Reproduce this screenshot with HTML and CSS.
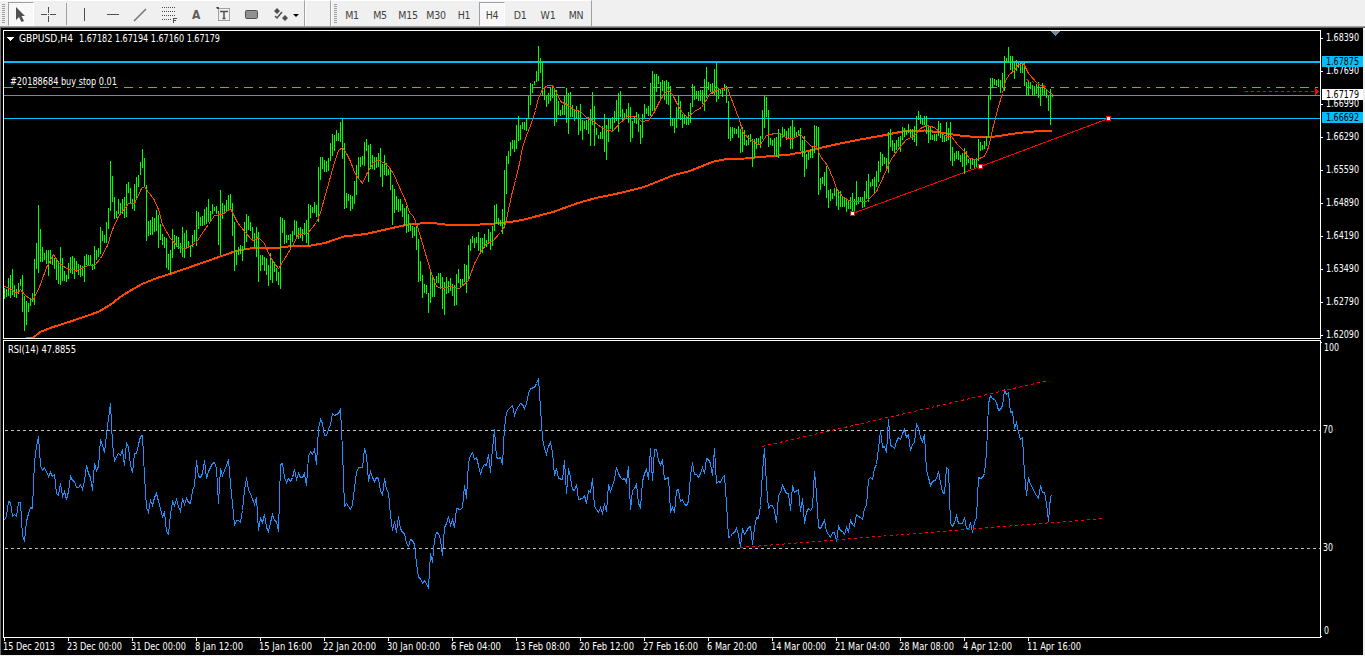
FILE: index.html
```html
<!DOCTYPE html>
<html lang="en">
<head>
    <meta charset="UTF-8">
    <meta name="viewport" content="width=device-width, initial-scale=1.0">
    <title>GBPUSD,H4</title>
    <link rel="stylesheet" href="styles.css">
</head>
<body>

<div class="toolbar">
    <div class="tools">
        <span class="grip"></span>
        <button class="tool pressed" title="Cursor"><svg width="26" height="23"><path d="M8 4V17L11 14L13.5 19L16 18L13.5 13H17Z" fill="#505050"/></svg></button>
        <button class="tool" title="Crosshair"><svg width="26" height="23"><path d="M5 11.5H11M14 11.5H20M12.5 4V10M12.5 13V19M12 11.5H13" stroke="#505050"/></svg></button>
        <span class="separator"></span>
        <button class="tool" title="Vertical line"><svg width="26" height="23"><path d="M13.5 5V18" stroke="#505050"/></svg></button>
        <button class="tool" title="Horizontal line"><svg width="26" height="23"><path d="M8 11.5H20" stroke="#505050"/></svg></button>
        <button class="tool" title="Trendline"><svg width="26" height="23"><path d="M7 18L19 6" stroke="#707070" stroke-width="1.4"/></svg></button>
        <button class="tool" title="Fibonacci"><svg width="26" height="23"><path d="M7 4.5H21M7 8.5H21M7 12.5H21M7 16.5H16" stroke="#505050" stroke-dasharray="1 1"/><path d="M18.5 20V15M18 15.5H22M18 17.5H21" stroke="#505050"/></svg></button>
        <button class="tool letter" title="Text">A</button>
        <button class="tool" title="Label"><svg width="26" height="23"><rect x="7.5" y="5.5" width="11" height="12" fill="none" stroke="#505050" stroke-dasharray="1 1"/><path d="M5 4H8V6H6Z" fill="#505050"/><path d="M9 8.5H17M13 8V16M11.5 15.5H14.5" stroke="#505050" stroke-width="1.5"/></svg></button>
        <button class="tool" title="Rectangle"><svg width="26" height="23"><rect x="6.5" y="7.5" width="12" height="8" rx="1" fill="#909090" stroke="#505050"/></svg></button>
        <button class="tool wide" title="Arrows"><svg width="34" height="23"><path d="M7 8L10 5L13 8L10 11ZM15 15L18 12L21 15L18 18Z" fill="#505050"/><path d="M8 13L10 15L15 9" fill="none" stroke="#505050" stroke-width="1.5"/><path d="M26 11H32L29 14Z" fill="#000"/></svg></button>
    </div>
    <div class="blank"></div>
    <div class="tools periods">
        <span class="grip"></span>
        <button class="tool">M1</button>
        <button class="tool">M5</button>
        <button class="tool">M15</button>
        <button class="tool">M30</button>
        <button class="tool">H1</button>
        <button class="tool pressed">H4</button>
        <button class="tool">D1</button>
        <button class="tool">W1</button>
        <button class="tool">MN</button>
    </div>
</div>

<div class="chart-window">
    <svg class="chart" viewBox="0 28 1363 627" width="1363" height="627">
        <!-- price levels -->
        <path class="level-thick" d="M4 62H1320"/>
        <path class="level" d="M4 118.5H1320"/>
        <path class="order" d="M4 87.5H1320"/>
        <path class="bid" d="M4 95.5H1320"/>
        <path class="stop" d="M1245 91.5H1315"/>
        <path d="M1315 88L1319 91.5L1315 95Z" fill="#f00"/>
        <path d="M1051 31H1060L1055.5 36Z" fill="#778899"/>

        <!-- price window -->
        <path class="trend" d="M852.5 213.5L980.5 166.5L1108.5 118.5"/>
        <path class="slow" id="slow"/>
        <path class="bars" id="bars"/>
        <path class="fast" id="fast"/>
        <path class="stop" d="M1026 79.5L1046 86.5"/>
        <g class="handles">
            <rect x="850.5" y="211.5" width="4" height="4"/>
            <rect x="978.5" y="164.5" width="4" height="4"/>
            <rect x="1106.5" y="116.5" width="4" height="4"/>
        </g>

        <!-- RSI window -->
        <path class="rsi-level" d="M5 430.5H1320M5 548.5H1320"/>
        <path class="rsi" id="rsi"/>
        <path class="stop" d="M762 446.5L1048 380.5M740 547.5L1104 518.5"/>

        <!-- frames and axes -->
        <path class="frame" d="M3.5 338.5V30.5H1320.5V338.5ZM3.5 637.5V340.5H1320.5V637.5ZM1321 342.5H1322M1321 636.5H1322"/>
        <g id="axes"></g>
        <rect x="1322" y="56" width="41" height="11" fill="#00bfff"/>
        <rect x="1322" y="89" width="41" height="11" fill="#fff"/>
        <rect x="1322" y="112" width="41" height="11" fill="#00bfff"/>
        <g class="tags">
            <text x="1326" y="65" textLength="33" lengthAdjust="spacingAndGlyphs">1.67875</text>
            <text x="1326" y="98" textLength="33" lengthAdjust="spacingAndGlyphs">1.67179</text>
            <text x="1326" y="121" textLength="33" lengthAdjust="spacingAndGlyphs">1.66692</text>
        </g>
        <text x="1324" y="351" textLength="15" lengthAdjust="spacingAndGlyphs">100</text>
        <text x="1323" y="433" textLength="10" lengthAdjust="spacingAndGlyphs">70</text>
        <text x="1323" y="551" textLength="10" lengthAdjust="spacingAndGlyphs">30</text>
        <text x="1324" y="634" textLength="5" lengthAdjust="spacingAndGlyphs">0</text>
        <path d="M7 37H14L10.5 41Z" fill="#fff"/>
        <text x="19" y="42" textLength="54" lengthAdjust="spacingAndGlyphs">GBPUSD,H4</text>
        <text x="79" y="42" textLength="141" lengthAdjust="spacingAndGlyphs">1.67182 1.67194 1.67160 1.67179</text>
        <text x="10" y="85" textLength="107" lengthAdjust="spacingAndGlyphs">#20188684 buy stop 0.01</text>
        <text x="8" y="353" textLength="68" lengthAdjust="spacingAndGlyphs">RSI(14) 47.8855</text>
    </svg>
</div>

<script src="chart.js"></script>
</body>
</html>
```

FILE: styles.css
```css
body {
    margin: 0;
    height: 656px;
    overflow: hidden;
    background-color: #f0f0f0;
    font-family: "DejaVu Sans Condensed", "DejaVu Sans", sans-serif;
}
.toolbar {
    display: flex;
    box-sizing: border-box;
    height: 28px;
    border-bottom: 1px solid #696969;
    box-shadow: inset 0 -1px #a0a0a0;
}
.tools {
    display: flex;
    align-items: center;
    box-sizing: border-box;
    height: 26px;
    width: 305px;
    border-top: 1px solid #fff;
    border-right: 1px solid #a0a0a0;
}
.blank {
    box-sizing: border-box;
    width: 26px;
    height: 26px;
    border-top: 1px solid #fff;
    border-left: 1px solid #fff;
    border-right: 1px solid #a0a0a0;
}
.periods {
    width: 261px;
    border-left: 1px solid #fff;
}
.grip {
    width: 3px;
    height: 20px;
    margin: 0 2px 0 2px;
    background: repeating-linear-gradient(#a0a0a0 0 1px, #f0f0f0 1px 2px);
}
.periods .grip {
    margin-right: 1px;
}
.tool {
    flex: none;
    display: flex;
    align-items: center;
    justify-content: center;
    box-sizing: border-box;
    width: 26px;
    height: 24px;
    margin: 0 1px;
    padding: 2px 0 0;
    border: 1px solid transparent;
    background: none;
    font-family: inherit;
    font-size: 10.5px;
    letter-spacing: -0.3px;
    color: #404040;
}
.tool svg {
    flex: none;
}
.pressed {
    border-color: #a0a0a0 #fff #fff #a0a0a0;
    background-color: #f8f8f8;
}
.wide {
    width: 34px;
}
.letter {
    font-size: 12px;
    font-weight: bold;
    color: #606060;
}
.separator {
    width: 1px;
    height: 22px;
    margin: 0 3px;
    background-color: #a0a0a0;
}
.chart-window {
    box-sizing: border-box;
    width: 1363px;
    height: 627px;
    border-left: 1px solid #696969;
    background-color: #000;
}
.chart {
    display: block;
    margin-left: -1px;
    shape-rendering: crispEdges;
}
.chart path {
    stroke-width: 1;
}
.chart text {
    font-size: 10.5px;
    fill: #fff;
}
.chart .tags text {
    fill: #000;
}
.chart .level-thick {
    stroke: #00bfff;
    stroke-width: 2;
}
.level {
    stroke: #00bfff;
}
.order {
    stroke: #32cd32;
    stroke-dasharray: 9 6 3 6;
}
.bid {
    stroke: #778899;
}
.stop {
    stroke: #f00;
    stroke-dasharray: 3 3;
}
.trend {
    fill: none;
    stroke: #f00;
}
.bars {
    stroke: #0f0;
}
.fast {
    fill: none;
    stroke: #ff4500;
}
.chart .slow {
    fill: none;
    stroke: #ff4500;
    stroke-width: 2;
}
.handles rect {
    fill: #fff;
    stroke: #f00;
}
.rsi-level {
    stroke: #c0c0c0;
    stroke-dasharray: 3 3;
}
.rsi {
    fill: none;
    stroke: #1e90ff;
}
.frame, .tick {
    fill: none;
    stroke: #fff;
}
```

FILE: chart.js
```js
// high-low of every bar, one bar each 2px from x = 4
const bars = `
288-299 289-297 278-296 275-298 269-295 285-297 289-298 283-294 279-286 275-312
296-331 301-325 303-312 298-306 293-302 259-305 243-269 205-273 229-262 247-262
253-260 250-264 250-276 250-264 255-265 258-269 258-280 261-284 247-285 258-281
271-281 275-282 263-279 257-273 256-274 258-279 261-272 264-275 265-277 266-276
256-282 254-265 255-266 255-265 264-270 246-269 250-260 248-257 227-254 231-241
235-243 222-243 208-229 161-211 176-202 197-219 211-218 199-214 203-213 199-214
197-218 184-217 182-193 188-204 199-209 184-211 177-199 175-187 162-175 149-168
158-186 185-241 221-236 220-235 217-235 218-232 210-231 215-248 224-240 234-245
237-248 238-268 254-270 250-274 229-258 235-249 236-247 237-249 243-253 227-257
233-258 230-249 241-248 245-257 235-247 230-242 211-246 212-229 217-226 216-226
209-225 207-224 199-222 211-221 204-214 207-211 206-214 211-245 190-255 203-219
205-213 200-211 195-209 194-208 203-236 222-271 250-265 247-255 245-254 246-261
222-250 214-242 216-230 222-231 227-240 233-248 227-257 232-282 255-271 255-265
257-271 258-275 265-286 253-280 261-283 262-272 268-281 272-285 217-289 218-233
220-244 235-243 235-240 234-248 231-242 220-235 221-238 228-239 227-238 229-241
223-235 220-243 204-246 205-218 207-213 202-213 205-217 167-222 157-180 157-169
160-172 161-172 158-171 143-161 134-156 135-151 130-141 133-141 122-142 119-159
143-209 193-208 194-201 195-211 196-209 181-204 165-195 157-178 157-167 156-165
142-166 139-151 145-182 144-169 155-169 157-170 157-168 153-167 148-177 164-187
155-175 163-176 169-175 168-190 185-225 189-213 196-210 199-212 199-211 204-217
208-226 206-233 214-232 224-231 226-238 227-236 226-250 239-282 261-281 275-298
284-293 285-294 293-313 271-303 276-297 279-297 276-283 273-283 273-289 277-309
282-315 277-294 281-293 278-291 284-296 285-306 274-305 269-283 279-288 279-285
264-282 265-293 245-281 239-251 236-243 238-248 237-243 232-251 238-254 238-253
234-248 240-247 229-244 232-250 226-246 205-231 204-224 218-225 220-226 209-234
170-228 156-194 151-164 142-156 140-149 140-152 125-149 116-141 125-140 122-129
122-130 118-131 96-119 83-105 84-93 81-85 71-82 46-81 58-73 62-96
88-100 96-107 93-104 87-101 85-98 89-126 90-122 101-115 110-116 105-115
96-115 88-123 93-134 92-117 105-117 109-121 106-118 110-135 104-131 120-140
121-129 120-130 117-134 109-146 92-125 106-146 128-135 135-139 132-139 126-139
114-152 125-160 118-142 119-129 117-131 111-123 100-121 93-132 91-117 109-121
113-119 109-119 103-123 107-142 121-138 116-123 112-124 114-132 125-144 114-138
104-118 108-114 106-116 83-116 71-111 74-112 74-92 76-84 82-101 80-91
81-100 80-104 82-105 86-126 118-126 118-133 107-128 96-119 101-120 114-128
115-124 117-125 112-125 103-123 84-107 86-100 91-99 91-101 90-101 90-104
79-111 67-98 82-90 84-92 83-94 69-95 63-102 88-99 89-94 88-97
84-91 86-103 101-139 127-141 127-138 128-134 129-134 126-138 129-153 127-152
130-145 140-146 135-145 134-142 139-167 139-158 138-149 138-144 136-148 110-139
95-128 97-117 110-147 138-145 140-146 138-155 137-157 129-158 133-147 127-138
129-136 131-140 128-138 126-149 120-149 127-138 132-137 130-136 128-151 140-157
136-177 154-169 152-160 149-158 147-158 125-153 126-148 127-195 178-190 177-184
172-186 166-198 190-208 189-201 193-199 188-196 189-206 191-210 191-207 196-207
198-207 199-212 200-209 197-209 193-215 199-212 181-205 197-204 197-202 197-208
191-207 181-199 174-202 182-187 179-186 177-194 171-187 161-182 152-172 154-166
157-164 158-170 132-173 129-147 140-151 143-153 140-150 137-147 136-152 127-140
128-137 130-135 124-133 129-138 129-140 126-142 116-146 111-120 115-124 119-125
116-125 116-134 126-143 126-140 135-140 134-141 134-141 121-136 123-138 133-142
135-142 122-141 128-140 122-161 147-166 153-161 151-159 151-160 155-162 153-167
148-174 151-165 159-163 159-169 159-165 160-168 158-167 139-161 142-151 145-150
141-149 136-146 95-138 78-100 78-88 79-85 80-86 79-87 80-93 73-88
56-91 58-63 47-63 56-70 56-73 63-79 60-71 63-68 63-73 64-73
62-86 82-96 80-96 82-89 85-96 86-96 84-94 82-98 88-106 83-95
86-96 89-98 96-111 89-125 94-97`;

const fast = `4,286 12,289 14,292 18,292 20,289 24,294 30,299 33,299 40,284 46,267 53,254 58,262
66,268 76,270 88,265 94,265 100,258 107,245 112,229 118,216 128,203 134,203 141,188 144,186
148,192 153,198 158,209 162,224 170,238 178,247 186,248 190,245 195,243 201,234 208,224 214,215
222,214 230,208 237,222 244,231 251,239 253,240 258,237 264,243 269,255 274,263 278,268 283,260
291,247 298,234 307,233 316,222 320,212 327,187 334,162 338,150 342,147 346,153 350,161 355,174
362,183 367,172 373,162 378,160 383,162 388,166 393,173 399,187 405,200 409,212 413,216 417,226
424,250 431,273 436,286 443,288 450,286 459,288 468,280 474,263 480,252 486,243 492,241 500,232
504,226 506,219 511,195 515,180 519,163 522,147 526,135 530,125 535,110 538,98 542,89 547,85
552,85 556,92 560,101 568,105 573,109 580,111 586,117 592,120 598,125 605,129 612,131 619,123
627,116 635,116 641,121 648,120 653,113 659,101 664,93 668,90 672,94 677,104 682,112 687,117
694,111 701,107 710,93 716,90 722,88 727,87 730,96 738,117 743,133 750,139 757,144 760,144
766,135 774,133 780,133 786,138 793,138 800,134 805,140 811,146 816,146 820,156 827,165 833,179
836,188 842,196 850,201 866,201 876,191 883,176 890,160 897,150 905,140 914,135 920,128 926,125
934,127 940,132 946,136 951,136 957,144 963,150 969,158 976,159 984,156 988,147 992,129 998,106
1002,93 1005,80 1009,74 1013,71 1018,64 1023,63 1028,73 1037,83 1044,87 1050,93 1053,94`;

const slow = `26,338 33,338 40,332 53,327 72,321 98,312 110,305 123,295 142,284 157,278 173,273
196,265 216,258 236,251 250,248.5 280,247.5 288,246.5 308,246 325,243 344,236.5 366,234 390,228.5
408,224.5 420,223.5 433,223 445,224.5 480,224.5 494,223.5 510,222 522,220 553,212 578,203 596,198
620,193 644,187 664,179 674,175 690,171 712,162 726,159 745,158.5 766,156.5 790,154.5 806,151.5
820,148 840,143.5 860,139.5 880,136 905,131 925,130.5 940,132.5 960,135.5 975,137 992,137
1018,133 1040,131 1052,130.5`;

const rsi = `4,520 6,515 8,501 10,502 12,516 14,514 16,516 18,502 20,502 22,535 24,541 26,521 28,513
30,507 32,508 34,461 36,446 38,436 40,465 42,470 44,467 48,476 50,472 52,476 54,474 56,493 58,495
60,483 62,496 64,491 66,499 68,491 70,476 72,480 74,481 76,487 78,487 80,484 82,489 84,480 86,465
88,473 90,477 92,490 94,463 96,470 98,466 100,439 102,445 104,452 106,434 108,418 110,403 112,443
114,461 116,456 118,453 120,455 122,449 124,465 126,442 128,447 130,465 132,472 134,453 136,453
138,444 140,436 142,435 144,476 146,507 148,512 150,500 152,505 154,497 156,493 158,501 162,516
164,512 166,531 168,534 170,514 172,501 174,505 176,499 178,506 180,511 182,498 184,504 186,498
188,502 190,503 192,490 194,485 196,460 198,476 200,477 202,473 204,460 206,478 208,471 212,463
214,462 216,468 218,503 220,468 222,475 226,465 228,459 230,483 232,503 234,525 236,520 238,520
240,522 242,510 244,490 246,477 248,490 250,493 254,504 256,497 258,530 260,518 262,522 264,514
266,527 268,531 270,522 272,514 274,520 276,521 278,531 280,464 282,463 284,477 286,482 288,478
290,481 292,477 294,469 296,479 298,473 300,477 302,477 304,473 306,485 308,456 310,451 312,454
314,449 316,464 318,428 320,419 322,423 324,435 326,435 328,429 330,424 332,413 334,415 336,414
338,413 340,409 342,450 344,506 346,503 350,509 352,504 354,487 356,472 358,467 362,467 364,448
366,455 368,481 370,471 372,477 374,481 376,477 378,478 380,490 382,495 384,478 386,489 388,492
390,515 392,530 394,521 396,532 398,516 400,528 402,532 404,533 406,543 408,546 410,539 412,540
414,544 416,563 418,577 420,578 422,583 424,580 428,587 430,553 432,562 434,539 436,532 438,533
440,539 442,555 444,527 446,523 448,516 450,525 452,519 454,527 456,508 460,509 462,507 464,485
466,498 468,462 470,455 472,452 474,459 476,457 478,465 480,474 482,467 484,464 486,465 488,454
490,472 492,448 494,429 496,457 498,458 500,457 502,464 504,427 506,412 508,409 512,405 514,415
516,409 520,403 522,404 524,408 526,403 528,393 530,388 534,387 536,383 538,378 540,408 542,438
544,448 546,454 548,446 550,442 552,452 554,475 556,468 558,478 562,479 564,460 566,493 568,468
570,477 572,489 574,490 576,484 578,499 582,498 584,495 586,503 588,490 590,492 592,478 594,506
598,512 600,507 602,513 604,503 606,511 608,484 610,491 612,485 614,479 616,467 618,473 620,477
622,479 624,478 626,482 628,466 630,509 632,490 634,488 636,484 638,503 640,507 642,481 644,473
646,469 648,479 650,448 652,480 654,449 656,449 658,460 660,464 662,460 664,479 666,478 668,477
670,511 672,507 674,512 676,490 678,489 680,501 682,499 684,504 686,505 688,501 690,475 692,462
694,474 696,474 698,477 700,473 702,467 704,473 706,458 708,459 710,463 712,475 714,448 716,483
718,481 720,482 722,477 724,475 726,503 728,537 730,536 732,533 734,532 736,528 738,534 740,546
742,528 744,534 746,531 748,527 750,526 752,544 754,527 756,517 758,518 760,505 762,472 764,448
766,484 768,508 770,505 772,505 774,510 776,522 778,495 780,492 782,485 784,489 786,493 788,493
790,510 792,485 794,492 798,489 800,511 802,498 804,523 806,512 808,508 810,510 812,507 814,471
816,493 818,527 820,528 824,520 826,531 830,537 832,532 834,532 836,541 838,526 840,530 842,531
844,534 846,527 848,531 850,520 852,524 854,526 856,514 862,519 864,508 866,505 868,479 870,477
872,479 874,468 876,464 878,448 880,430 882,447 884,446 886,452 888,419 890,445 892,446 894,448
896,441 898,437 900,439 902,433 904,429 906,437 908,434 910,450 912,444 914,442 916,423 918,428
920,437 922,441 924,434 926,470 928,477 930,485 932,481 936,479 938,471 940,482 942,492 944,493
946,467 948,469 950,523 952,526 954,522 956,515 958,523 962,523 964,517 966,528 968,529 970,522
972,532 974,522 976,517 978,477 980,478 982,477 984,473 986,453 988,403 990,395 992,398 994,399
996,402 998,410 1000,409 1002,405 1004,390 1006,394 1008,392 1010,412 1012,411 1014,428 1016,422
1018,432 1020,439 1022,437 1024,473 1026,495 1028,477 1030,484 1032,487 1034,492 1038,498
1040,485 1042,492 1044,492 1046,503 1048,521 1050,496 1051,495`;

// label and drawn width
const dates = [
    ['15 Dec 2013', 52], ['23 Dec 00:00', 55], ['31 Dec 00:00', 55], ['8 Jan 12:00', 48],
    ['15 Jan 16:00', 53], ['22 Jan 20:00', 53], ['30 Jan 00:00', 53], ['6 Feb 04:00', 50],
    ['13 Feb 08:00', 55], ['20 Feb 12:00', 55], ['27 Feb 16:00', 55], ['6 Mar 20:00', 50],
    ['14 Mar 00:00', 55], ['21 Mar 04:00', 55], ['28 Mar 08:00', 55], ['4 Apr 12:00', 49],
    ['11 Apr 16:00', 54]
];
const prices = ['1.68390', '1.67690', '1.66990', '1.66290', '1.65590', '1.64890', '1.64190', '1.63490', '1.62790', '1.62090'];

function line(id, points, offset) {
    const d = points.trim().split(/\s+/).map(p => {
        const [x, y] = p.split(',').map(Number);
        return (x + offset) + ' ' + (y + offset);
    });
    document.getElementById(id).setAttribute('d', 'M' + d.join('L'));
}

document.getElementById('bars').setAttribute('d', bars.trim().split(/\s+/).map((bar, i) => {
    const [high, low] = bar.split('-');
    return 'M' + (4.5 + i * 2) + ' ' + high + 'V' + low;
}).join(''));
line('fast', fast, 0.5);
line('slow', slow, 0);
line('rsi', rsi, 0.5);

function label(x, y, width, text) {
    return `<text x="${x}" y="${y}" textLength="${width}" lengthAdjust="spacingAndGlyphs">${text}</text>`;
}

let axes = '';
dates.forEach(([text, width], i) => {
    const x = 4 + i * 64;
    axes += `<path class="tick" d="M${x + 0.5} 638V641"/>` + label(x - 1, 650, width, text);
});
prices.forEach((text, i) => {
    const y = 38 + i * 33;
    axes += `<path class="tick" d="M1321 ${y + 0.5}H1323"/>` + label(1326, y + 3, 33, text);
});
document.getElementById('axes').innerHTML = axes;
```
